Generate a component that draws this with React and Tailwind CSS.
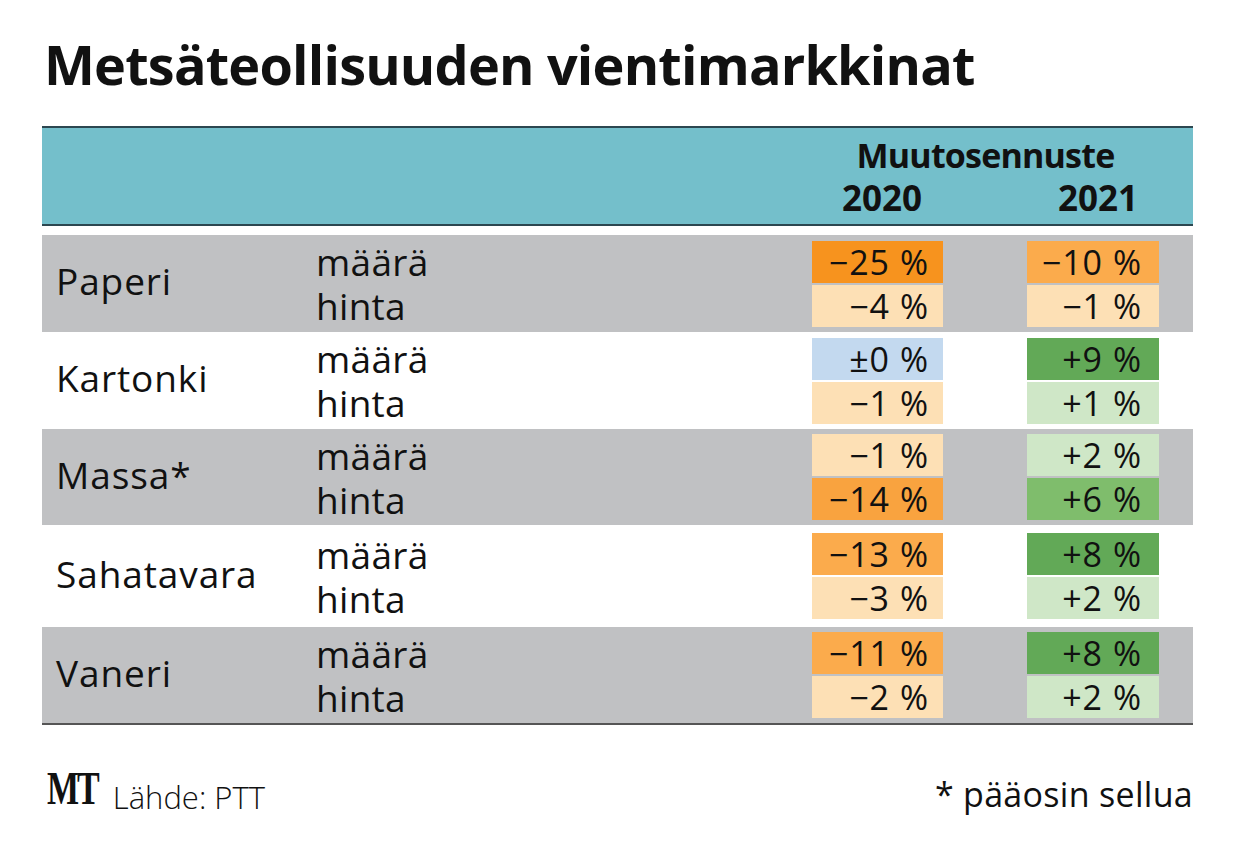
const ROWS = [
  { name: 'Paperi', gray: true, h: 'h-[97px]', cells: [['−25', '#f7931e'], ['−10', '#fbab4c'], ['−4', '#fde0b5'], ['−1', '#fde0b5']] },
  { name: 'Kartonki', gray: false, h: 'h-[97px]', cells: [['±0', '#c3d9ef'], ['+9', '#62a957'], ['−1', '#fde0b5'], ['+1', '#cfe7c7']] },
  { name: 'Massa*', gray: true, h: 'h-[96px]', cells: [['−1', '#fde0b5'], ['+2', '#cfe7c7'], ['−14', '#f9a33f'], ['+6', '#7fbd6c']] },
  { name: 'Sahatavara', gray: false, h: 'h-[102px]', cells: [['−13', '#fbab4c'], ['+8', '#62a957'], ['−3', '#fde0b5'], ['+2', '#cfe7c7']] },
  { name: 'Vaneri', gray: true, h: 'h-[96px]', cells: [['−11', '#fbab4c'], ['+8', '#62a957'], ['−2', '#fde0b5'], ['+2', '#cfe7c7']] },
];

function Cell({ value, color, wide }) {
  return (
    <div
      className={`h-[42px] flex items-center justify-end leading-none text-[34px] tracking-[1px] ${wide ? 'w-[132px] pr-[17px]' : 'w-[131px] pr-[14px]'}`}
      style={{ backgroundColor: color }}
    >
      {value} %
    </div>
  );
}

export default function App() {
  const font = { fontFamily: '"Open Sans", "Noto Sans", sans-serif' };
  return (
    <div className="w-[1240px] h-[854px] bg-white text-[#111]" style={font}>
      <div className="pt-[37px] pl-[44px]">
        <h1 className="text-[54px] font-bold leading-none tracking-[-0.8px]">Metsäteollisuuden vientimarkkinat</h1>
      </div>

      <div className="ml-[42px] w-[1151px] mt-[35px]">
        <div className="h-[100px] bg-[#74bfcb] border-t-2 border-b-2 border-[#2c4750] flex">
          <div className="ml-[770px] w-[347px] flex flex-col items-center pt-[10px] font-bold leading-none">
            <div className="text-[34px] tracking-[-0.8px]">Muutosennuste</div>
            <div className="w-full flex text-[35px] mt-[8px]">
              <div className="w-[131px] text-right pr-[21px]">2020</div>
              <div className="w-[84px]" />
              <div className="w-[132px] text-right pr-[21px]">2021</div>
            </div>
          </div>
        </div>

        <div className="mt-[9px] border-b-2 border-[#555]">
          {ROWS.map((r) => (
            <div key={r.name} className={`${r.h} flex items-center ${r.gray ? 'bg-[#c0c1c3]' : 'bg-white'}`}>
              <div className="w-[274px] pl-[14px] pb-[6px] text-[37px] tracking-[0.9px] leading-none">{r.name}</div>
              <div className="w-[496px] flex flex-col gap-[2px] text-[37px] tracking-[0.3px] leading-none">
                <div className="h-[42px] flex items-center">määrä</div>
                <div className="h-[42px] flex items-center">hinta</div>
              </div>
              <div className="flex gap-[84px]">
                <div className="flex flex-col gap-[2px]">
                  <Cell value={r.cells[0][0]} color={r.cells[0][1]} />
                  <Cell value={r.cells[2][0]} color={r.cells[2][1]} />
                </div>
                <div className="flex flex-col gap-[2px]">
                  <Cell value={r.cells[1][0]} color={r.cells[1][1]} wide />
                  <Cell value={r.cells[3][0]} color={r.cells[3][1]} wide />
                </div>
              </div>
            </div>
          ))}
        </div>
      </div>

      <div className="ml-[47px] mr-[47px] mt-[52px] flex items-end justify-between">
        <div className="flex items-end gap-[15px]">
          <span
            className="text-[34px] font-bold leading-none tracking-[-2px] scale-y-[1.38] origin-bottom"
            style={{ fontFamily: '"Liberation Serif", "DejaVu Serif", serif' }}
          >
            MT
          </span>
          <span className="text-[31px] font-light leading-none mb-[-1px]">Lähde: PTT</span>
        </div>
        <span className="text-[34px] leading-none tracking-[0.3px] mb-[1px]">* pääosin sellua</span>
      </div>
    </div>
  );
}
